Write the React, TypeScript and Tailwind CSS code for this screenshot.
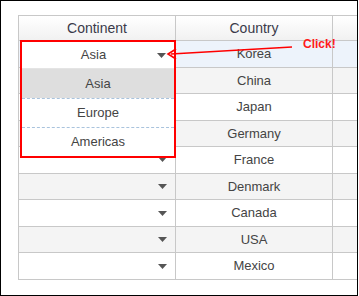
import React from 'react';

const rows = ['Korea', 'China', 'Japan', 'Germany', 'France', 'Denmark', 'Canada', 'USA', 'Mexico'];

function Caret() {
  return (
    <svg width="9" height="5" viewBox="0 0 9 5" className="block">
      <path d="M0 0 H9 L4.5 5 Z" fill="#555" />
    </svg>
  );
}

export default function App() {
  return (
    <div
      className="relative w-[358px] h-[296px] border border-black bg-white overflow-hidden text-[13px] text-[#444]"
      style={{ fontFamily: '"Liberation Sans", Arial, sans-serif' }}
    >
      <div className="mt-[14px] ml-[17px] w-[340px] border-l border-t border-[#c8c8c8]">
        {/* header */}
        <div className="flex h-[25px] bg-gradient-to-b from-white to-[#f1f1f1] border-b border-[#c8c8c8] text-[#3a3a4a] text-[14px]">
          <div className="w-[157px] shrink-0 flex items-center justify-center border-r border-[#c8c8c8]">Continent</div>
          <div className="w-[157px] shrink-0 flex items-center justify-center border-r border-[#c8c8c8]">Country</div>
          <div className="flex-1" />
        </div>
        {rows.map((c, i) => (
          <div
            key={c}
            className={
              'flex h-[26.55px] border-b border-[#c8c8c8] ' +
              (i === 0 ? 'bg-[#edf3fb]' : i % 2 === 1 ? 'bg-[#f4f4f4]' : 'bg-white')
            }
          >
            <div className="w-[157px] shrink-0 flex items-center justify-end pr-[8px] border-r border-[#c8c8c8]">
              <Caret />
            </div>
            <div className="w-[157px] shrink-0 flex items-center justify-center border-r border-[#c8c8c8]">{c}</div>
            <div className="flex-1" />
          </div>
        ))}
      </div>

      {/* open dropdown */}
      <div className="absolute left-[19px] top-[39px] w-[156px] h-[118px] border-2 border-[#ff0000] bg-white flex flex-col">
        <div className="h-[27px] flex items-center border-b border-[#e4e4e4]">
          <div className="flex-1 text-center pl-[8px]">Asia</div>
          <div className="pr-[8px]">
            <Caret />
          </div>
        </div>
        <div className="h-[29px] flex items-center justify-center bg-[#dedede]">Asia</div>
        <div className="h-[29px] flex items-center justify-center border-t border-dashed border-[#a9c3dd]">Europe</div>
        <div className="h-[29px] flex items-center justify-center border-t border-dashed border-[#a9c3dd]">Americas</div>
      </div>

      {/* annotation */}
      <svg className="absolute left-0 top-0" width="358" height="296">
        <line x1="291" y1="46" x2="170" y2="53" stroke="#ff0000" strokeWidth="1.3" />
        <path d="M175 48 L167 53 L175 58" fill="none" stroke="#ff0000" strokeWidth="1.6" />
      </svg>
      <div className="absolute left-[302px] top-[34px] text-[#ff1a1a] font-bold text-[12px]">Click!</div>
    </div>
  );
}
